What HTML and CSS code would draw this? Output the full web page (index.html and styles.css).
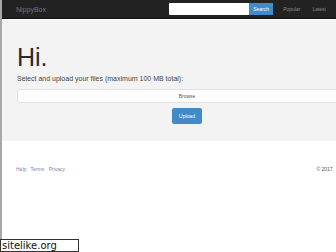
FILE: index.html
```html
<!DOCTYPE html>
<html lang="en">
<head>
    <meta charset="UTF-8">
    <title>NippyBox</title>
    <link rel="stylesheet" href="styles.css">
</head>
<body>
    <div class="page">
        <nav class="navbar">
            <a class="brand" href="#">NippyBox</a>
            <form class="search" action="#">
                <input type="text" class="search-input">
                <button type="submit" class="search-btn">Search</button>
            </form>
            <a class="nav-link" href="#">Popular</a>
            <a class="nav-link" href="#">Latest</a>
        </nav>

        <div class="jumbotron">
            <div class="container">
                <h1>Hi.</h1>
                <p>Select and upload your files (maximum 100 MB total):</p>
                <div class="browse">Browse</div>
                <div class="actions">
                    <button class="upload-btn">Upload</button>
                </div>
            </div>
        </div>

        <footer class="footer">
            <div class="footer-links">
                <a href="#">Help</a>
                <a href="#">Terms</a>
                <a href="#">Privacy</a>
            </div>
            <div class="copy">&copy; 2017,</div>
        </footer>
    </div>

    <div class="watermark">sitelike.org</div>
</body>
</html>
```

FILE: styles.css
```css
body {
    margin: 0;
    font-family: "Liberation Sans", Arial, sans-serif;
    background-color: #fff;
    overflow: hidden;
    width: 336px;
    height: 252px;
}

.page {
    border-left: 2px solid #a8a8a8;
    height: 252px;
    box-sizing: border-box;
}

.navbar {
    display: flex;
    align-items: center;
    height: 18px;
    background-color: #222;
    border-bottom: 1px solid #111;
    padding-left: 14px;
}

.brand {
    color: #777;
    font-size: 7px;
    text-decoration: none;
}

.search {
    display: flex;
    margin: 0 0 0 auto;
}

.search-input {
    width: 80px;
    height: 12px;
    border: none;
    border-radius: 1px 0 0 1px;
    padding: 0;
    box-sizing: border-box;
    background: #fff;
}

.search-btn {
    width: 24px;
    height: 12px;
    padding: 0;
    border: none;
    background-color: #428bca;
    color: #fff;
    font-family: inherit;
    font-size: 5px;
}

.nav-link {
    color: #8a8a8a;
    font-size: 5px;
    text-decoration: none;
    margin-left: 10px;
}

.nav-link:last-child {
    margin-left: 12px;
    margin-right: 10px;
}

.jumbotron {
    background-color: #f3f3f3;
    margin-top: 1px;
    padding: 25px 0 19px 15px;
    height: 121px;
    box-sizing: border-box;
}

.container {
    width: 340px;
}

h1 {
    margin: 0;
    font-size: 25px;
    font-weight: normal;
    color: #2b2b2b;
    line-height: 25px;
}

p {
    margin: 5px 0 7px;
    font-size: 7px;
    color: #444;
}

.browse {
    height: 12px;
    line-height: 12px;
    background-color: #fff;
    border: 1px solid #e2e2e2;
    border-radius: 2px;
    text-align: center;
    font-size: 5px;
    color: #555;
}

.actions {
    display: flex;
    justify-content: center;
    margin-top: 5px;
}

.upload-btn {
    width: 30px;
    height: 16px;
    padding: 0;
    border: none;
    border-radius: 2px;
    background-color: #428bca;
    color: #fff;
    font-family: inherit;
    font-size: 5px;
}

.footer {
    display: flex;
    justify-content: space-between;
    padding: 25px 2px 0 14px;
    font-size: 5px;
}

.footer-links a {
    color: #7c83a8;
    text-decoration: none;
    margin-right: 3px;
}

.copy {
    color: #555;
}

.watermark {
    position: absolute;
    left: 0;
    bottom: 0;
    width: 76px;
    height: 11px;
    border: 1px solid #333;
    background: #fff;
    font-family: "DejaVu Sans", sans-serif;
    font-size: 10px;
    line-height: 11px;
    color: #111;
    padding-left: 1px;
}
```
